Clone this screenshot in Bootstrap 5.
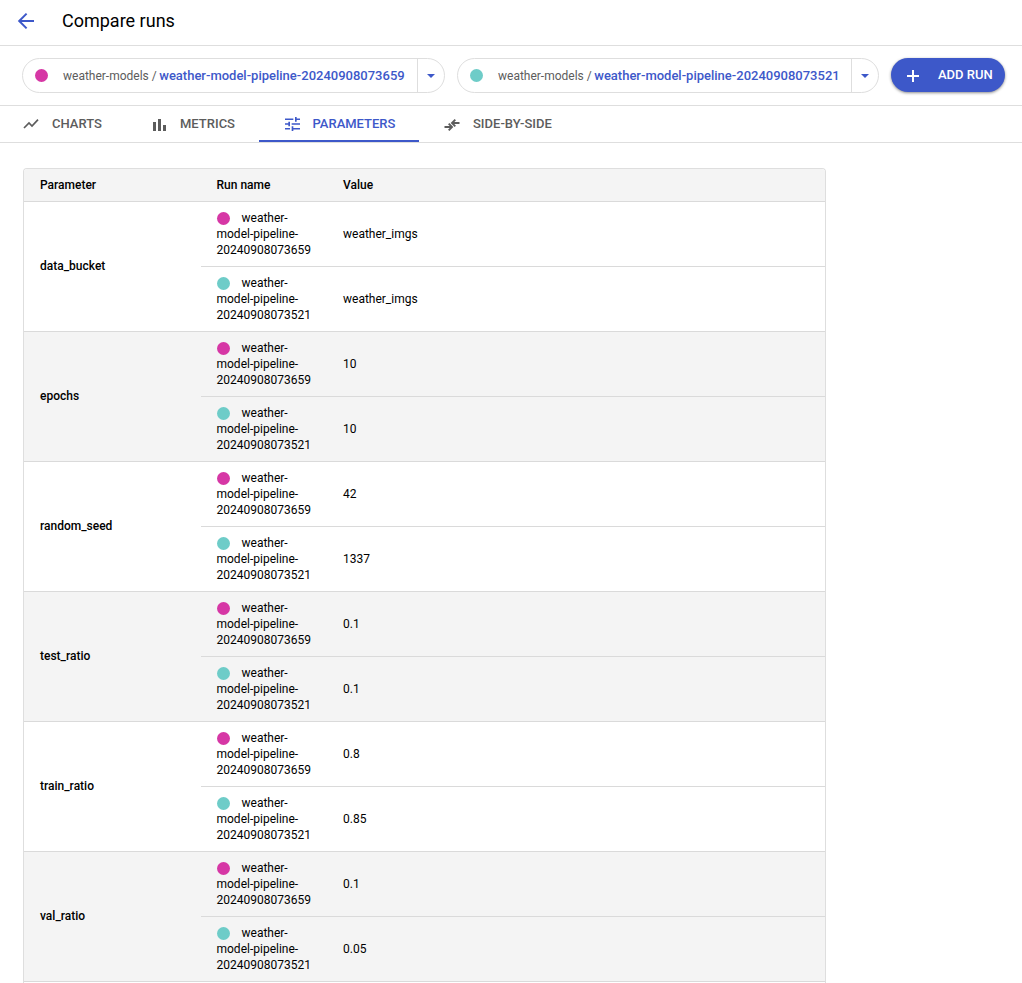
<!DOCTYPE html>
<html lang="en">
<head>
<meta charset="utf-8">
<meta name="viewport" content="width=device-width, initial-scale=1">
<title>Compare runs</title>
<link href="https://cdn.jsdelivr.net/npm/bootstrap@5.3.0/dist/css/bootstrap.min.css" rel="stylesheet">
<style>
:root{--brand:#3d58c9;--rule:#dedede}
body{font-family:Roboto,sans-serif;font-size:12px;line-height:16px;color:#000;overflow:hidden}
svg{flex:none;display:block}
.bar{border-bottom:1px solid var(--rule)}
.topbar{height:46px;padding-left:17px}
.topbar h1{font-size:18px;line-height:24px;font-weight:400;margin:-4px 0 0 26px}
.topbar svg{margin-top:-4px}
.runs{height:60px;padding:12px 0 0 22px;gap:12px}
.pill{height:35px;border:1px solid var(--rule);border-radius:18px}
.pill .run-label{padding-left:12px;width:394px;color:#5c5c5c}
.pill .run-label.second{width:393px}
.pill a{color:var(--brand);font-weight:500;font-size:13px;text-decoration:none;margin-left:2.5px}
.pill .toggle{width:27px;border-left:1px solid var(--rule)}
.dot{display:inline-block;width:13px;height:13px;border-radius:50%;background:#d637a5;flex:none}
.dot.teal{background:#6eccc8}
.pill .dot{margin-right:15px}
.add{width:114px;height:34px;border-radius:17px;background:var(--brand);color:#fff;font-weight:500;font-size:13px;padding:0 0 0 16px;border:0;box-shadow:0 1px 3px rgba(0,0,0,.45)}
.add svg{margin-top:2px}
.add span{margin-left:19px}
.tabs{height:37px}
.tabs a{color:#5c5c5c;font-size:13px;font-weight:500;text-decoration:none;height:36px;gap:13px}
.tabs .t1{width:129px;padding-left:23px}
.tabs .t2{width:130px;padding-left:24px;gap:14px}
.tabs .t2 svg{margin-top:2px}
.tabs .t3{width:160px;padding-left:25.500px;color:var(--brand);box-shadow:inset 0 -2px var(--brand)}
.tabs .t4{padding-left:25px}
.tabs .t4 svg{margin-top:1px}
.params{width:803px;margin:25px 0 0 23px;border:1px solid var(--rule);border-radius:4px 4px 0 0;border-bottom:0;overflow:hidden}
.params table{margin:0;table-layout:fixed;border-collapse:separate;border-spacing:0;width:801px;font-size:12px;line-height:16px}
.params th,.params td{padding:8px 16px;border-bottom:1px solid #dadada;vertical-align:middle;color:#000;text-align:left}
.params th{font-weight:500}
.params tbody th{padding-bottom:10px}
.params thead th,.params tbody:nth-of-type(even) tr>*{background:#f4f4f4}
.params td:nth-last-child(2),.params thead th:nth-child(2){padding:8px 12px 8px 15.5px}
.params .dot{vertical-align:-3px;margin-right:12px}
</style>
</head>
<body>
<header class="bar topbar d-flex align-items-center">
  <svg width="19" height="18" viewBox="0 0 19 18" fill="none" stroke="#3d58c9" stroke-width="2"><path d="M17 9H3M9.6 1.6L2.2 9l7.4 7.4"/></svg>
  <h1>Compare runs</h1>
</header>
<section class="bar runs d-flex align-items-start">
  <div class="pill d-flex">
    <div class="run-label d-flex align-items-center"><i class="dot"></i><span>weather-models /</span><a href="#">weather-model-pipeline-20240908073659</a></div>
    <div class="toggle d-flex align-items-center justify-content-center"><svg width="8" height="4" viewBox="0 0 8 4"><path d="M0 0h8L4 4z" fill="#3d58c9"/></svg></div>
  </div>
  <div class="pill d-flex">
    <div class="run-label second d-flex align-items-center"><i class="dot teal"></i><span>weather-models /</span><a href="#">weather-model-pipeline-20240908073521</a></div>
    <div class="toggle d-flex align-items-center justify-content-center"><svg width="8" height="4" viewBox="0 0 8 4"><path d="M0 0h8L4 4z" fill="#3d58c9"/></svg></div>
  </div>
  <button class="add d-flex align-items-center"><svg width="12" height="12" viewBox="0 0 12 12"><path d="M6 0v12M0 6h12" stroke="#fff" stroke-width="2"/></svg><span>ADD RUN</span></button>
</section>
<nav class="bar tabs d-flex">
  <a href="#" class="t1 d-flex align-items-center"><svg width="16" height="10" viewBox="0 0 16 10" fill="none" stroke="#5c5c5c" stroke-width="1.7"><path d="M1 9l5-5 3 3 6-6.4"/></svg><span>CHARTS</span></a>
  <a href="#" class="t2 d-flex align-items-center"><svg width="13" height="12" viewBox="0 0 13 12" fill="#5c5c5c"><path d="M0 3h3v9H0zM5 0h3v12H5zM10 6h3v6h-3z"/></svg><span>METRICS</span></a>
  <a href="#" class="t3 d-flex align-items-center"><svg width="15" height="14" viewBox="3 3 18 18" preserveAspectRatio="none" fill="#3d58c9"><path d="M3 17v2h6v-2H3zM3 5v2h10V5H3zm10 16v-2h8v-2h-8v-2h-2v6h2zM7 9v2H3v2h4v2h2V9H7zm14 4v-2H11v2h10zm-6-4h2V7h4V5h-4V3h-2v6z"/></svg><span>PARAMETERS</span></a>
  <a href="#" class="t4 d-flex align-items-center"><svg width="16" height="12" viewBox="0 0 16 12" fill="none" stroke="#5c5c5c" stroke-width="1.9"><path d="M.5 8H7.500M4.700 4.700L8 8 4.700 11.300M15.500 4H8.500M11.300 .7L8 4 11.300 7.300"/></svg><span>SIDE-BY-SIDE</span></a>
</nav>
<main class="params">
<table>
<colgroup><col style="width:177px"><col style="width:126px"><col></colgroup>
<thead><tr><th>Parameter</th><th>Run name</th><th>Value</th></tr></thead>
<tbody>
<tr><th rowspan="2">data_bucket</th><td><i class="dot"></i>weather-<br>model-pipeline-<br>20240908073659</td><td>weather_imgs</td></tr>
<tr><td><i class="dot teal"></i>weather-<br>model-pipeline-<br>20240908073521</td><td>weather_imgs</td></tr>
</tbody>
<tbody>
<tr><th rowspan="2">epochs</th><td><i class="dot"></i>weather-<br>model-pipeline-<br>20240908073659</td><td>10</td></tr>
<tr><td><i class="dot teal"></i>weather-<br>model-pipeline-<br>20240908073521</td><td>10</td></tr>
</tbody>
<tbody>
<tr><th rowspan="2">random_seed</th><td><i class="dot"></i>weather-<br>model-pipeline-<br>20240908073659</td><td>42</td></tr>
<tr><td><i class="dot teal"></i>weather-<br>model-pipeline-<br>20240908073521</td><td>1337</td></tr>
</tbody>
<tbody>
<tr><th rowspan="2">test_ratio</th><td><i class="dot"></i>weather-<br>model-pipeline-<br>20240908073659</td><td>0.1</td></tr>
<tr><td><i class="dot teal"></i>weather-<br>model-pipeline-<br>20240908073521</td><td>0.1</td></tr>
</tbody>
<tbody>
<tr><th rowspan="2">train_ratio</th><td><i class="dot"></i>weather-<br>model-pipeline-<br>20240908073659</td><td>0.8</td></tr>
<tr><td><i class="dot teal"></i>weather-<br>model-pipeline-<br>20240908073521</td><td>0.85</td></tr>
</tbody>
<tbody>
<tr><th rowspan="2">val_ratio</th><td><i class="dot"></i>weather-<br>model-pipeline-<br>20240908073659</td><td>0.1</td></tr>
<tr><td><i class="dot teal"></i>weather-<br>model-pipeline-<br>20240908073521</td><td>0.05</td></tr>
</tbody>
<tbody><tr><th>&nbsp;</th><td></td><td></td></tr></tbody>
</table>
</main>
<script src="https://cdn.jsdelivr.net/npm/bootstrap@5.3.0/dist/js/bootstrap.bundle.min.js"></script>
</body>
</html>
